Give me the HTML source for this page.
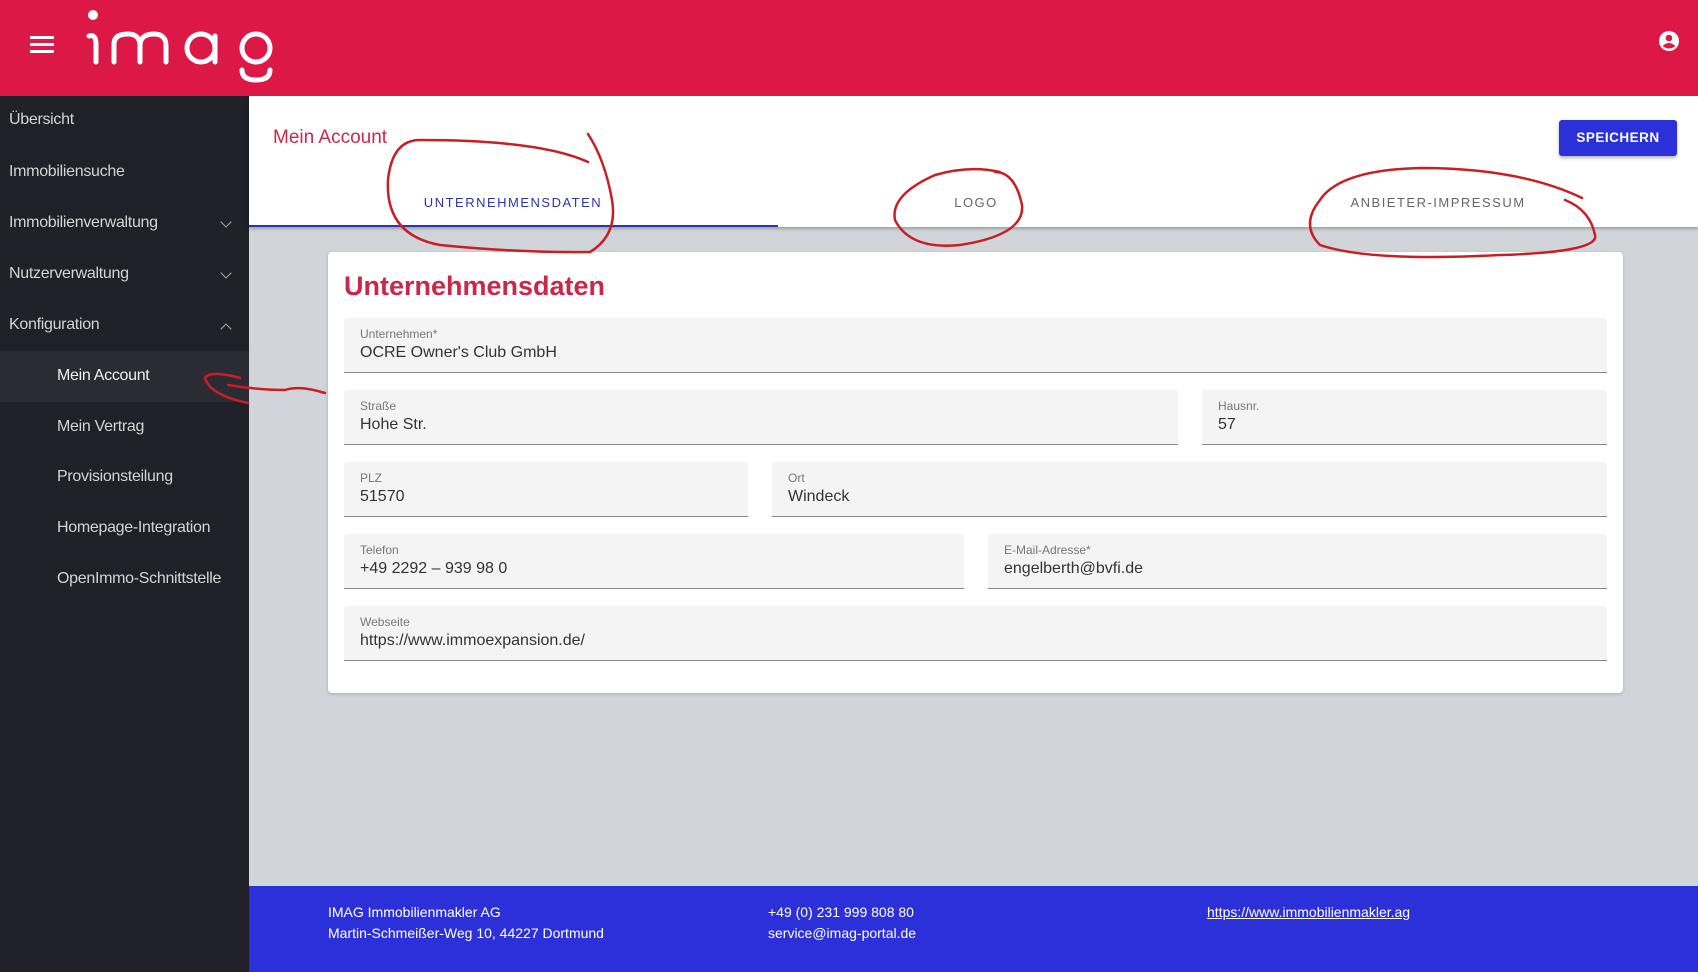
<!DOCTYPE html>
<html><head><meta charset="utf-8"><style>
*{margin:0;padding:0;box-sizing:border-box}
body{width:1698px;height:972px;position:relative;overflow:hidden;font-family:"Liberation Sans",sans-serif;background:#d1d4d8}
.abs{position:absolute}
#hdr{left:0;top:0;width:1698px;height:96px;background:#dc1846}
#side{left:0;top:96px;width:249px;height:876px;background:#1f2028}
.si{position:absolute;left:9px;color:#d4d4d6;font-size:16px;letter-spacing:-0.3px}
.chev{position:absolute;left:222px;width:8px;height:8px;border-right:1.3px solid #aaa;border-bottom:1.3px solid #aaa}
#top{left:249px;top:96px;width:1449px;height:131px;background:#fff;box-shadow:0 2px 3px rgba(0,0,0,.25)}
.tab{position:absolute;top:195px;font-size:13px;letter-spacing:1.5px;color:#666;transform:translateX(-50%)}
#card{left:328px;top:252px;width:1295px;height:441px;background:#fff;border-radius:4px;box-shadow:0 1px 3px rgba(0,0,0,.2)}
.f{position:absolute;background:#f4f4f4;border-bottom:1.5px solid #8a8a8a;border-radius:3px 3px 0 0}
.f .l{position:absolute;left:16px;top:9px;font-size:12px;color:#777}
.f .v{position:absolute;left:16px;top:26px;font-size:16px;color:#333}
#foot{left:249px;top:886px;width:1449px;height:86px;background:#2c30d9;color:#fff;font-size:14px}
#foot div{position:absolute;line-height:21px}
</style></head><body>
<div id="hdr" class="abs">
  <div class="abs" style="left:30px;top:36px;width:24px;height:3px;background:#fff"></div>
  <div class="abs" style="left:30px;top:43px;width:24px;height:3px;background:#fff"></div>
  <div class="abs" style="left:30px;top:50px;width:24px;height:3px;background:#fff"></div>
  <svg class="abs" style="left:84px;top:6px" width="195" height="80" viewBox="0 0 195 80" fill="none" stroke="#fff" stroke-width="5" stroke-linecap="round">
    <circle cx="9" cy="9" r="5" fill="#fff" stroke="none"/>
    <path d="M5 30 Q12 28 12 38 L12 56"/>
    <path d="M30 56 L30 38 Q30 28 44 28 Q56 28 56 40 L56 56 M56 40 Q56 28 70 28 Q82 28 82 40 L82 56"/>
    <circle cx="117" cy="42" r="14"/><path d="M131 30 L131 56"/>
    <circle cx="172" cy="42" r="14"/><path d="M158 64 Q158 74 172 74 Q186 74 186 64"/>
  </svg>
  <svg class="abs" style="left:1658px;top:30px" width="22" height="22" viewBox="0 0 22 22"><circle cx="11" cy="11" r="10" fill="#fff"/><circle cx="11" cy="8" r="3.3" fill="#dc1846"/><path d="M4.5 16 Q11 10 17.5 16 Q11 21 4.5 16Z" fill="#dc1846"/></svg>
</div>
<div id="side" class="abs">
  <div class="si" style="top:15px">Übersicht</div>
  <div class="si" style="top:67px">Immobiliensuche</div>
  <div class="si" style="top:118px">Immobilienverwaltung</div><div class="chev" style="top:122px;transform:rotate(45deg)"></div>
  <div class="si" style="top:169px">Nutzerverwaltung</div><div class="chev" style="top:173px;transform:rotate(45deg)"></div>
  <div class="si" style="top:220px">Konfiguration</div><div class="chev" style="top:229px;transform:rotate(225deg)"></div>
  <div class="abs" style="left:0;top:255px;width:249px;height:51px;background:#2a2b33"></div>
  <div class="si" style="left:57px;top:271px;color:#f0f0f0">Mein Account</div>
  <div class="si" style="left:57px;top:322px">Mein Vertrag</div>
  <div class="si" style="left:57px;top:372px">Provisionsteilung</div>
  <div class="si" style="left:57px;top:423px">Homepage-Integration</div>
  <div class="si" style="left:57px;top:474px">OpenImmo-Schnittstelle</div>
</div>
<div id="top" class="abs"></div>
<div class="abs" style="left:273px;top:127px;font-size:19px;color:#c8284a">Mein Account</div>
<div class="abs" style="left:1559px;top:120px;width:118px;height:36px;background:#2c30d9;border-radius:3px;box-shadow:0 2px 3px rgba(0,0,0,.3);color:#fff;font-weight:bold;font-size:13.5px;letter-spacing:.5px;text-align:center;line-height:36px">SPEICHERN</div>
<div class="tab" style="left:513px;color:#2f34a8">UNTERNEHMENSDATEN</div>
<div class="tab" style="left:976px">LOGO</div>
<div class="tab" style="left:1438px">ANBIETER-IMPRESSUM</div>
<div class="abs" style="left:249px;top:225px;width:529px;height:2px;background:#2f34a8"></div>
<div id="card" class="abs"></div>
<div class="abs" style="left:344px;top:271px;font-size:27px;font-weight:bold;color:#c8284a">Unternehmensdaten</div>
<div class="f" style="left:344px;top:318px;width:1263px;height:55px"><div class="l">Unternehmen*</div><div class="v">OCRE Owner's Club GmbH</div></div>
<div class="f" style="left:344px;top:390px;width:834px;height:55px"><div class="l">Straße</div><div class="v">Hohe Str.</div></div>
<div class="f" style="left:1202px;top:390px;width:405px;height:55px"><div class="l">Hausnr.</div><div class="v">57</div></div>
<div class="f" style="left:344px;top:462px;width:404px;height:55px"><div class="l">PLZ</div><div class="v">51570</div></div>
<div class="f" style="left:772px;top:462px;width:835px;height:55px"><div class="l">Ort</div><div class="v">Windeck</div></div>
<div class="f" style="left:344px;top:534px;width:620px;height:55px"><div class="l">Telefon</div><div class="v">+49 2292 – 939 98 0</div></div>
<div class="f" style="left:988px;top:534px;width:619px;height:55px"><div class="l">E-Mail-Adresse*</div><div class="v">engelberth@bvfi.de</div></div>
<div class="f" style="left:344px;top:606px;width:1263px;height:55px"><div class="l">Webseite</div><div class="v">https://www.immoexpansion.de/</div></div>
<div id="foot" class="abs">
  <div style="left:79px;top:16px">IMAG Immobilienmakler AG<br>Martin-Schmeißer-Weg 10, 44227 Dortmund</div>
  <div style="left:519px;top:16px">+49 (0) 231 999 808 80<br>service@imag-portal.de</div>
  <div style="left:958px;top:16px;text-decoration:underline">https://www.immobilienmakler.ag</div>
</div>
<svg class="abs" style="left:0;top:0" width="1698" height="972" fill="none" stroke="#c81e24" stroke-width="2.5" stroke-linecap="round">
  <path d="M588 162 Q540 140 420 140 Q392 140 388 180 Q385 235 440 245 Q520 253 590 252 Q618 235 612 200 Q605 160 588 134"/>
  <path d="M1000 172 Q970 165 935 175 Q890 195 895 220 Q910 250 960 245 Q1025 235 1022 205 Q1015 172 995 172"/>
  <path d="M1582 198 Q1520 168 1420 168 Q1340 170 1320 200 Q1300 225 1320 245 Q1370 262 1500 255 Q1600 252 1595 235 Q1590 210 1565 200"/>
  <path d="M240 378 Q210 370 205 378 Q210 395 248 403 M228 385 Q260 390 285 390 Q300 385 325 393"/>
</svg>
</body></html>
